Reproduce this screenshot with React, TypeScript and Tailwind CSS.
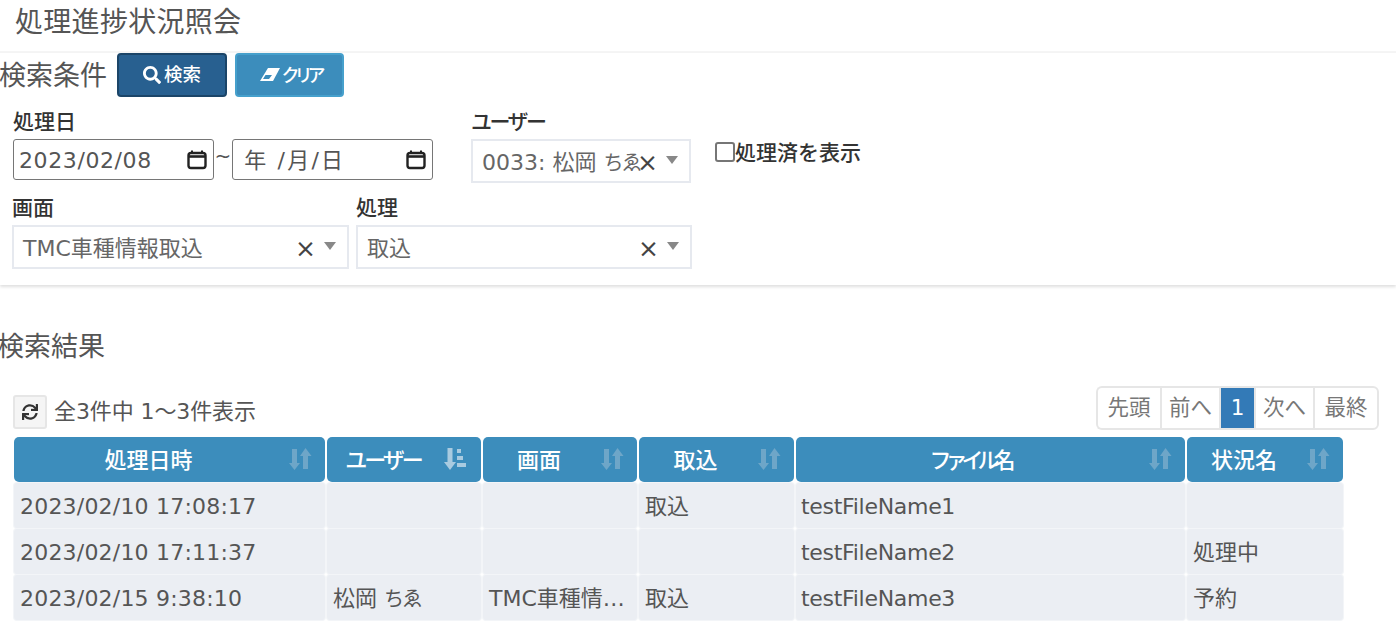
import { FaSearch, FaSync } from 'react-icons/fa';
import type { ReactNode } from 'react';

const FONT = "font-['DejaVu_Sans','Noto_Sans_CJK_JP',sans-serif]";

const COLS = [
  { name: '処理日時', w: 'w-[311px]' },
  { name: 'ユーザー', w: 'w-[154px]', sorted: true, tight: 'tracking-[-3px]' },
  { name: '画面', w: 'w-[154px]' },
  { name: '取込', w: 'w-[155px]' },
  { name: 'ファイル名', w: 'w-[389px]', tight: 'tracking-[-6px]' },
  { name: '状況名', w: 'w-[156px]' },
];

const Chie = () => <>松岡 <span className="text-[20px] tracking-[-1.500px]">ちゑ</span></>;

const ROWS: ReactNode[][] = [
  ['2023/02/10 17:08:17', '', '', '取込', 'testFileName1', ''],
  ['2023/02/10 17:11:37', '', '', '', 'testFileName2', '処理中'],
  ['2023/02/15 9:38:10', <Chie />, 'TMC車種情報取込', '取込', 'testFileName3', '予約'],
];

function SortIcon({ sorted }: { sorted?: boolean }) {
  if (sorted) {
    return (
      <svg width="24" height="24" viewBox="0 0 24 24" fill="#a9cbe0" className="shrink-0">
        <path d="M3.500 1h5v14h3.500l-6 8-6-8h3.500z" />
        <path d="M13 2h4v4h-4zM13 9h6v4h-6zM13 16h9v4h-9z" />
      </svg>
    );
  }
  return (
    <svg width="24" height="24" viewBox="0 0 24 24" fill="#6ea6c8" className="shrink-0">
      <path d="M4 2h5v14h3l-5.500 7L1 16h3z" />
      <path d="M15 22h5V9h3.500L17.500 1 12 9h3z" />
    </svg>
  );
}

function CalendarIcon() {
  return (
    <svg width="20" height="20" viewBox="0 0 20 20" fill="none" className="shrink-0">
      <path d="M5 0.500v3M15 0.500v3" stroke="#222" strokeWidth="2" />
      <rect x="1.500" y="3" width="17" height="15" rx="2.500" stroke="#222" strokeWidth="2.400" />
      <path d="M2 6.500h16" stroke="#222" strokeWidth="2.600" />
    </svg>
  );
}

function EraserIcon() {
  return (
    <svg width="21" height="14" viewBox="0 0 21 14" className="shrink-0">
      <path d="M9 0h12l-7 13H1z" fill="#fff" />
      <path d="M6.500 7h6.500L10 11H4z" fill="#3c8dbc" />
    </svg>
  );
}

function DateBox({ value }: { value: ReactNode }) {
  return (
    <div className="flex h-[41px] w-[201px] items-center justify-between rounded-[3px] border border-[#767676] bg-white pl-[5px] pr-[6px] text-[22px] tracking-[0.6px] text-[#555]">
      <span className="whitespace-pre pt-[2px]">{value}</span>
      <CalendarIcon />
    </div>
  );
}

function SelectBox({ value, className }: { value: ReactNode; className: string }) {
  return (
    <div className={`flex h-[44px] items-center border-2 border-[#e6e9ef] bg-white pl-[9px] pr-[11px] text-[22px] text-[#666] ${className}`}>
      <span className="min-w-0 flex-1 whitespace-pre pt-[2px]">{value}</span>
      <span className="pt-[3px] text-[25px] font-medium leading-none text-[#444]">×</span>
      <span className="mb-[3px] ml-[8px] h-0 w-0 border-x-[6px] border-t-[8px] border-x-transparent border-t-[#888]" />
    </div>
  );
}

function FieldLabel({ children, tight }: { children: ReactNode; tight?: boolean }) {
  return <div className={`h-[28px] text-[21px] font-medium leading-[28px] text-[#333] ${tight ? 'tracking-[-2.500px]' : ''}`}>{children}</div>;
}

function PagerItem({ label, active, className = '' }: { label: string; active?: boolean; className?: string }) {
  return (
    <div className={`flex h-[44px] items-center justify-center border-y-2 border-l-2 border-[#e6e6e6] text-[21.500px] ${active ? 'border-[#337ab7] bg-[#337ab7] font-medium text-white' : 'bg-white text-[#777]'} ${className}`}>
      {label}
    </div>
  );
}

export default function App() {
  return (
    <div className={`${FONT} h-[639px] w-[1396px] overflow-hidden bg-white`}>
      <header className="h-[53px] border-b-2 border-[#f5f5f5] pl-[15px] pt-[3px] text-[28px] leading-[40px] tracking-[0.3px] text-[#555]">
        処理進捗状況照会
      </header>

      <section className="h-[232px] shadow-[0_2px_3px_rgba(0,0,0,0.13)]">
        <div className="flex items-center">
          <h2 className="-ml-px w-[118px] pt-[2px] text-[27px] font-normal leading-[42px] text-[#555]">検索条件</h2>
          <button className="flex h-[44px] w-[110px] items-center justify-center gap-[3px] rounded-[4px] border-2 border-[#1b4568] bg-[#286090] text-[18.500px] font-medium text-white">
            <FaSearch className="text-[18px]" />検索
          </button>
          <button className="ml-[8px] flex h-[44px] w-[109px] items-center justify-center gap-[2px] rounded-[4px] border-2 border-[#46a0cc] bg-[#3c8dbc] text-[18px] font-medium tracking-[-5px] text-white">
            <EraserIcon />クリア
          </button>
        </div>

        <div className="flex pl-[13px] pt-[11px]">
          <div>
            <FieldLabel>処理日</FieldLabel>
            <div className="mt-[3px] flex items-start">
              <DateBox value="2023/02/08" />
              <span className="w-[18px] text-center text-[20px] leading-[34px] text-[#555]">~</span>
              <DateBox value={<span className="-ml-[3px] tracking-[2.200px]"> 年 /月/日</span>} />
            </div>
          </div>
          <div className="ml-[38px]">
            <FieldLabel tight>ユーザー</FieldLabel>
            <SelectBox value={<>0033: <Chie /></>} className="mt-[3px] w-[220px]" />
          </div>
          <label className="ml-[24px] mt-[32px] flex h-[28px] items-center text-[21px] font-medium text-[#333]">
            <span className="mb-[4px] h-[20px] w-[20px] rounded-[3px] border-2 border-[#767676] bg-white" />
            処理済を表示
          </label>
        </div>

        <div className="flex pl-[12px] pt-[11px]">
          <div>
            <FieldLabel>画面</FieldLabel>
            <SelectBox value="TMC車種情報取込" className="mt-[3px] w-[337px]" />
          </div>
          <div className="ml-[7px]">
            <FieldLabel>処理</FieldLabel>
            <SelectBox value="取込" className="mt-[3px] w-[336px]" />
          </div>
        </div>
      </section>

      <section>
        <h2 className="-ml-[3px] mt-[42px] h-[40px] text-[27px] font-normal leading-[40px] text-[#555]">検索結果</h2>

        <div className="ml-[13px] mr-[17px] mt-[19px] flex h-[44px] items-end justify-between">
          <div className="flex items-center pb-[1px]">
            <button className="flex h-[34px] w-[34px] items-center justify-center rounded-[3px] border-2 border-[#e6e6e6] bg-[#f5f5f5] text-[#333]">
              <FaSync className="text-[16px]" />
            </button>
            <span className="ml-[7px] text-[22px] leading-[34px] tracking-[-0.1px] text-[#555]">全3件中 1～3件表示</span>
          </div>
          <div className="flex">
            <PagerItem label="先頭" className="w-[64px] rounded-l-[6px]" />
            <PagerItem label="前へ" className="w-[59px]" />
            <PagerItem label="1" active className="w-[35px]" />
            <PagerItem label="次へ" className="w-[59px] border-l-0" />
            <PagerItem label="最終" className="w-[66px] rounded-r-[6px] border-r-2" />
          </div>
        </div>

        <table className="ml-[12px] mt-[6px] w-[1333px] table-fixed border-separate border-spacing-x-[2px] border-spacing-y-[1px]">
          <thead>
            <tr>
              {COLS.map((c) => (
                <th key={c.name} className={`${c.w} h-[45px] rounded-[5px] bg-[#3c8dbc] p-0 text-[22px] font-medium text-white`}>
                  <div className="relative flex items-center justify-center pr-[42px] pt-[2px]">
                    <span className={c.tight}>{c.name}</span>
                    <span className="absolute right-[13px] top-[5px]"><SortIcon sorted={c.sorted} /></span>
                  </div>
                </th>
              ))}
            </tr>
          </thead>
          <tbody>
            {ROWS.map((row, i) => (
              <tr key={i}>
                {row.map((cell, j) => (
                  <td key={j} className={`h-[45px] overflow-hidden text-ellipsis whitespace-nowrap rounded-[3px] bg-[#ebeef3] py-0 pr-[6px] pt-[2px] text-[22px] text-[#555] shadow-[0_0_0_1px_#f3f5f8] ${j === 0 ? 'pl-[6px] tracking-[0.2px]' : ''} ${j === 4 ? 'pl-[5px] tracking-[-0.3px]' : ''} ${j !== 0 && j !== 4 ? 'pl-[6px]' : ''}`}>
                    {cell}
                  </td>
                ))}
              </tr>
            ))}
          </tbody>
        </table>
      </section>
    </div>
  );
}
